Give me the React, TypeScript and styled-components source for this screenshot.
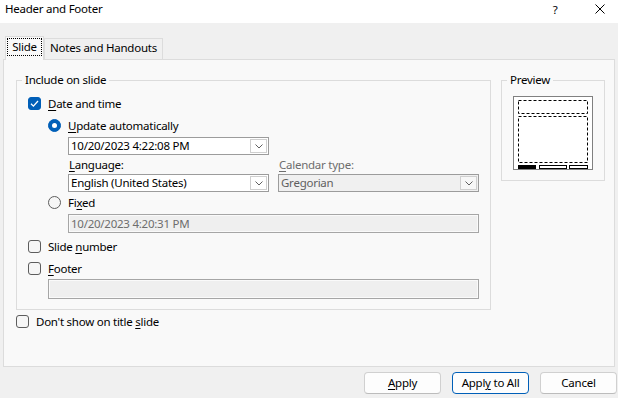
import React from "react";
import styled, { createGlobalStyle } from "styled-components";

const GlobalStyle = createGlobalStyle`
  html, body {
    margin: 0;
    padding: 0;
  }
  body {
    background: #f0f0f0;
    font-family: "Noto Sans", "Open Sans", sans-serif;
    font-size: 11.5px;
    letter-spacing: -0.25px;
    color: #000;
  }
  * {
    box-sizing: border-box;
  }
`;

const Dialog = styled.div`
  width: 618px;
  height: 398px;
  display: flex;
  flex-direction: column;
  background: #f0f0f0;
  overflow: hidden;
`;

const TitleBar = styled.div`
  flex: none;
  height: 23px;
  display: flex;
  align-items: flex-start;
  background: #fff;
  line-height: 17px;
  padding-left: 5px;
`;

const Title = styled.div`
  flex: 1;
`;

const TitleButton = styled.div<{ $mr: number }>`
  width: 20px;
  height: 18px;
  display: flex;
  align-items: center;
  justify-content: center;
  margin-right: ${(p) => p.$mr}px;
`;

const Body = styled.div`
  flex: 1;
  display: flex;
  flex-direction: column;
  padding: 13px 1px 0 3px;
`;

const TabStrip = styled.div`
  display: flex;
  align-items: flex-start;
  height: 23px;
  padding-left: 2px;
`;

const Tab = styled.div<{ $active?: boolean; $w: number }>`
  position: relative;
  z-index: ${(p) => (p.$active ? 1 : 0)};
  width: ${(p) => p.$w}px;
  height: ${(p) => (p.$active ? 24 : 21)}px;
  margin-top: ${(p) => (p.$active ? 0 : 2)}px;
  border: 1px solid #dcdcdc;
  border-bottom: none;
  background: ${(p) => (p.$active ? "#f9f9f9" : "#f0f0f0")};
  padding: 1px 0 0;
  line-height: 16px;
  text-align: center;
  white-space: nowrap;
`;

const FocusLabel = styled.span`
  display: block;
  height: 18px;
  margin: 0 1px;
  border: 1px dotted #000;
  line-height: 16px;
`;

const Panel = styled.div`
  width: 612px;
  height: 308px;
  background: #f9f9f9;
  border: 1px solid #dcdcdc;
  padding: 20px 0 0 12px;
`;

const GroupRow = styled.div`
  display: flex;
  align-items: flex-start;
  gap: 10px;
`;

const Group = styled.div<{ $w: number; $h?: number }>`
  width: ${(p) => p.$w}px;
  height: ${(p) => (p.$h ? `${p.$h}px` : "auto")};
  border: 1px solid #dcdcdc;
`;

const Legend = styled.div`
  width: fit-content;
  height: 16px;
  margin: -9px 0 0 5px;
  padding: 0 3px;
  background: #f9f9f9;
  line-height: 16px;
`;

const GroupBody = styled.div`
  display: flex;
  flex-direction: column;
  align-items: flex-start;
  padding: 0 0 10px 11px;
`;

const Row = styled.div<{ $mt: number; $indent?: number }>`
  display: flex;
  align-items: center;
  gap: 7px;
  height: 17px;
  margin-top: ${(p) => p.$mt}px;
  margin-left: ${(p) => p.$indent ?? 0}px;
  line-height: 16px;
`;

const Key = styled.span`
  text-decoration: underline;
  text-underline-offset: 2px;
`;

const Box = styled.span<{ $checked?: boolean }>`
  flex: none;
  width: 13px;
  height: 13px;
  border-radius: 3px;
  border: 1px solid ${(p) => (p.$checked ? "#005fb8" : "#5d5d5d")};
  background: ${(p) => (p.$checked ? "#005fb8" : "#f6f6f6")};
  display: flex;
  align-items: center;
  justify-content: center;
`;

const Radio = styled.span<{ $checked?: boolean }>`
  flex: none;
  width: 13px;
  height: 13px;
  border-radius: 50%;
  border: 1px solid ${(p) => (p.$checked ? "#005fb8" : "#5d5d5d")};
  background: ${(p) => (p.$checked ? "#005fb8" : "#f6f6f6")};
  display: flex;
  align-items: center;
  justify-content: center;

  &::after {
    content: "";
    display: ${(p) => (p.$checked ? "block" : "none")};
    width: 5px;
    height: 5px;
    border-radius: 50%;
    background: #fff;
  }
`;

const Combo = styled.div<{ $disabled?: boolean; $mt?: number; $indent?: number }>`
  width: 201px;
  height: 18px;
  margin-top: ${(p) => p.$mt ?? 0}px;
  margin-left: ${(p) => p.$indent ?? 0}px;
  display: flex;
  align-items: center;
  border: 1px solid #9c9c9c;
  background: ${(p) => (p.$disabled ? "#f0f0f0" : "#fff")};
  color: ${(p) => (p.$disabled ? "#5f5f5f" : "#000")};
  padding-left: 2px;
  line-height: 16px;
  white-space: nowrap;
`;

const ComboText = styled.span`
  flex: 1;
  overflow: hidden;
`;

const DropButton = styled.span<{ $disabled?: boolean }>`
  flex: none;
  width: 17px;
  height: 14px;
  margin: 0 1px 0 2px;
  border: 1px solid #cfcfcf;
  background: ${(p) => (p.$disabled ? "#f7f7f7" : "#fff")};
  display: flex;
  align-items: center;
  justify-content: center;
`;

const LangGrid = styled.div`
  display: grid;
  grid-template-columns: 201px 201px;
  grid-template-rows: 16px 18px;
  column-gap: 9px;
  row-gap: 1px;
  margin-top: 2px;
  margin-left: 40px;
`;

const FieldLabel = styled.div<{ $disabled?: boolean }>`
  padding-left: 1px;
  line-height: 16px;
  color: ${(p) => (p.$disabled ? "#6d6d6d" : "#000")};
`;

const TextField = styled.div<{ $w: number; $h: number; $mt: number; $indent: number }>`
  width: ${(p) => p.$w}px;
  height: ${(p) => p.$h}px;
  margin-top: ${(p) => p.$mt}px;
  margin-left: ${(p) => p.$indent}px;
  border: 1px solid #a6a6a6;
  background: #efefef;
  box-shadow: inset 0 0 0 1px #fafafa;
  color: #6d6d6d;
  padding-left: 2px;
  line-height: ${(p) => p.$h - 2}px;
`;

const PreviewBody = styled.div`
  padding: 8px 0 0 11px;
`;

const Outside = styled(Row)`
  margin-left: 0;
`;

const ButtonRow = styled.div`
  display: flex;
  justify-content: flex-end;
  gap: 11px;
  margin-top: 5px;
`;

const Button = styled.button<{ $primary?: boolean }>`
  width: 77px;
  height: 22px;
  padding: 0;
  border-radius: 4px;
  border: 1px solid ${(p) => (p.$primary ? "#005fb8" : "#d0d0d0")};
  border-bottom-color: ${(p) => (p.$primary ? "#005fb8" : "#bcbcbc")};
  background: #fdfdfd;
  font: inherit;
  letter-spacing: inherit;
  line-height: 18px;
  color: #000;
`;

const Chevron = () => (
  <svg width="8" height="5" viewBox="0 0 8 5">
    <path d="M0.5 0.5 L4 4 L7.5 0.5" fill="none" stroke="#606060" strokeWidth="1" />
  </svg>
);

const Check = () => (
  <svg width="11" height="11" viewBox="0 0 11 11">
    <path d="M2 5.8 L4.4 8.1 L9 3" fill="none" stroke="#fff" strokeWidth="1.3" />
  </svg>
);

const SlidePreview = () => (
  <svg width="80" height="74" viewBox="0 0 80 74">
    <rect x="0.5" y="0.5" width="79" height="73" fill="#fff" stroke="#808080" />
    <rect x="5.5" y="4.5" width="69" height="13" fill="none" stroke="#000" strokeDasharray="3 2" />
    <rect x="5.5" y="20.5" width="69" height="46" fill="none" stroke="#000" strokeDasharray="3 2" />
    <rect x="5" y="69" width="18" height="4" fill="#000" />
    <rect x="26.5" y="69.5" width="27" height="3" fill="#fff" stroke="#000" />
    <rect x="56.5" y="69.5" width="18" height="3" fill="#fff" stroke="#000" />
  </svg>
);

const App = () => {
  return (
    <Dialog>
      <GlobalStyle />
      <TitleBar>
        <Title>Header and Footer</Title>
        <TitleButton $mr={25}>?</TitleButton>
        <TitleButton $mr={8}>
          <svg width="10" height="10" viewBox="0 0 10 10">
            <path d="M0.5 0.5 L9.5 9.5 M9.5 0.5 L0.5 9.5" stroke="#000" strokeWidth="1" />
          </svg>
        </TitleButton>
      </TitleBar>
      <Body>
        <TabStrip>
          <Tab $active $w={39}>
            <FocusLabel>Slide</FocusLabel>
          </Tab>
          <Tab $w={119}>Notes and Handouts</Tab>
        </TabStrip>
        <Panel>
          <GroupRow>
            <Group $w={475}>
              <Legend>Include on slide</Legend>
              <GroupBody>
                <Row $mt={7}>
                  <Box $checked>
                    <Check />
                  </Box>
                  <span>
                    <Key>D</Key>ate and time
                  </span>
                </Row>
                <Row $mt={5} $indent={20}>
                  <Radio $checked />
                  <span>
                    <Key>U</Key>pdate automatically
                  </span>
                </Row>
                <Combo $mt={3} $indent={40}>
                  <ComboText>10/20/2023 4:22:08 PM</ComboText>
                  <DropButton>
                    <Chevron />
                  </DropButton>
                </Combo>
                <LangGrid>
                  <FieldLabel>
                    <Key>L</Key>anguage:
                  </FieldLabel>
                  <FieldLabel $disabled>
                    <Key>C</Key>alendar type:
                  </FieldLabel>
                  <Combo>
                    <ComboText>English (United States)</ComboText>
                    <DropButton>
                      <Chevron />
                    </DropButton>
                  </Combo>
                  <Combo $disabled>
                    <ComboText>Gregorian</ComboText>
                    <DropButton $disabled>
                      <Chevron />
                    </DropButton>
                  </Combo>
                </LangGrid>
                <Row $mt={2} $indent={20}>
                  <Radio />
                  <span>
                    Fi<Key>x</Key>ed
                  </span>
                </Row>
                <TextField $w={411} $h={19} $mt={3} $indent={40}>
                  10/20/2023 4:20:31 PM
                </TextField>
                <Row $mt={5}>
                  <Box />
                  <span>
                    Slide <Key>n</Key>umber
                  </span>
                </Row>
                <Row $mt={5}>
                  <Box />
                  <span>
                    <Key>F</Key>ooter
                  </span>
                </Row>
                <TextField $w={431} $h={20} $mt={2} $indent={20} />
              </GroupBody>
            </Group>
            <Group $w={104} $h={101}>
              <Legend>Preview</Legend>
              <PreviewBody>
                <SlidePreview />
              </PreviewBody>
            </Group>
          </GroupRow>
          <Outside $mt={3}>
            <Box />
            <span>
              Don't show on title <Key>s</Key>lide
            </span>
          </Outside>
        </Panel>
        <ButtonRow>
          <Button>
            <Key>A</Key>pply
          </Button>
          <Button $primary>
            Appl<Key>y</Key> to All
          </Button>
          <Button>Cancel</Button>
        </ButtonRow>
      </Body>
    </Dialog>
  );
};

export default App;
